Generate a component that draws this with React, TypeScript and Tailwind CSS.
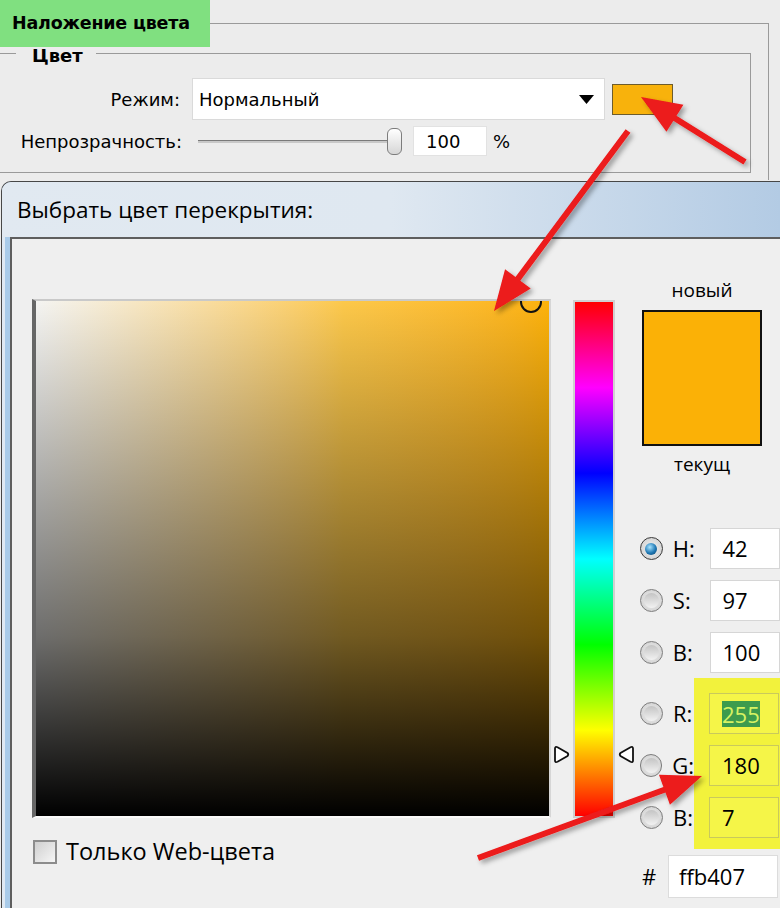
import React from "react";

const ui = "font-['DejaVu_Sans',sans-serif]";
const win = "font-['Open_Sans','Noto_Sans',sans-serif]";

type Pt = [number, number];

// polygon for a straight annotation arrow, tail -> tip
function arrowPoints(tail: Pt, tip: Pt, w = 6, hl = 40, hw = 32) {
  const dx = tip[0] - tail[0];
  const dy = tip[1] - tail[1];
  const len = Math.hypot(dx, dy);
  const ux = dx / len;
  const uy = dy / len;
  const nx = -uy;
  const ny = ux;
  const bx = tip[0] - ux * hl;
  const by = tip[1] - uy * hl;
  const pts: Pt[] = [
    [tail[0] + (nx * w) / 2, tail[1] + (ny * w) / 2],
    [bx + (nx * w) / 2, by + (ny * w) / 2],
    [bx + (nx * hw) / 2, by + (ny * hw) / 2],
    tip,
    [bx - (nx * hw) / 2, by - (ny * hw) / 2],
    [bx - (nx * w) / 2, by - (ny * w) / 2],
    [tail[0] - (nx * w) / 2, tail[1] - (ny * w) / 2],
  ];
  return pts.map((p) => p.join(",")).join(" ");
}

function Arrows() {
  const arrows: [Pt, Pt][] = [
    [[745, 162], [641, 97]],
    [[628, 131], [494, 311]],
    [[478, 858], [702, 776]],
  ];
  return (
    <svg className="absolute inset-0 pointer-events-none" width="780" height="908" viewBox="0 0 780 908">
      <defs>
        <filter id="sh" x="-20%" y="-20%" width="140%" height="140%">
          <feDropShadow dx="3" dy="3" stdDeviation="2.5" floodColor="#000" floodOpacity="0.35" />
        </filter>
      </defs>
      {arrows.map(([a, b], i) => (
        <polygon key={i} points={arrowPoints(a, b)} fill="#ec1a1a" filter="url(#sh)" />
      ))}
    </svg>
  );
}

function TopPanel() {
  return (
    <div className={`h-[180px] text-[18px] ${ui}`}>
      <fieldset className="h-[180px] mr-[11px] border-t border-r border-[#9a9a9a]">
        <legend className="p-0">
          <span className="block w-[210px] h-[47px] leading-[47px] pl-[12px] bg-[#80e080] font-bold text-[17.5px] tracking-[-0.2px]">
            Наложение цвета
          </span>
        </legend>
        <fieldset className="mr-[17px] border-t border-r border-b border-[#9a9a9a] pt-[19px] pb-[16px]">
          <legend className="ml-[16px] pl-[16px] pr-[13px] h-[12px] leading-[12px]">
            <span className="block translate-y-[3px] font-bold text-[18px]">Цвет</span>
          </legend>
          <div className="flex items-center h-[42px]">
            <div className="w-[180px] text-right">Режим:</div>
            <div className="ml-[12px] w-[413px] h-[42px] bg-white border border-[#dadada] flex items-center justify-between pl-[6px] pr-[10px]">
              <span>Нормальный</span>
              <svg width="15" height="9" viewBox="0 0 15 9">
                <polygon points="0,0 15,0 7.5,9" fill="#000" />
              </svg>
            </div>
            <div className="ml-[7px] w-[61px] h-[31px] bg-[#f8b20c] border border-[#6d5c2c]" />
          </div>
          <div className="flex items-center h-[30px] mt-[6px]">
            <div className="w-[182px] text-right">Непрозрачность:</div>
            <div className="ml-[16px] flex items-center">
              <div className="w-[192px] h-[3px] bg-[#c8c8c8] border-t border-[#7a7a7a]" />
              <div className="-ml-[3px] w-[15px] h-[27px] rounded-[6px] border border-[#7c7c7c] bg-linear-to-b from-white to-[#d6d6d6]" />
            </div>
            <div className="ml-[11px] w-[74px] h-[30px] bg-white border border-[#e2e2e2] flex items-center pl-[12px]">100</div>
            <div className="ml-[6px]">%</div>
          </div>
        </fieldset>
      </fieldset>
    </div>
  );
}

function HueArrow({ dir }: { dir: "right" | "left" }) {
  return (
    <svg width="17" height="19" viewBox="0 0 17 19" className={dir === "left" ? "-scale-x-100" : ""}>
      <path d="M2 3.5 Q2 1 4.5 2.2 L14.5 8 Q16 9.5 14.5 11 L4.5 16.8 Q2 18 2 15.5 Z" fill="#fff" stroke="#111" strokeWidth="1.8" />
    </svg>
  );
}

function Radio({ checked = false }: { checked?: boolean }) {
  return (
    <div
      className={`w-[23px] h-[23px] rounded-full border flex items-center justify-center bg-radial from-[#f4f4f4] to-[#c9c9c9] ${
        checked ? "border-[#3a3a3a]" : "border-[#7d7d7d]"
      }`}
    >
      {checked ? (
        <div className="w-[12px] h-[12px] rounded-full bg-[radial-gradient(circle_at_40%_35%,#a8e4ff,#1f78b4_55%,#0b3f66)]" />
      ) : (
        <div className="w-[15px] h-[15px] rounded-full bg-linear-to-b from-[#c4c4c4] to-[#f2f2f2]" />
      )}
    </div>
  );
}

function RightColumn() {
  const hsb = [
    { k: "H:", v: "42", checked: true },
    { k: "S:", v: "97" },
    { k: "B:", v: "100" },
  ];
  const rgb = ["R:", "G:", "B:"];
  return (
    <div className="ml-[25px] w-[140px] shrink-0 text-[22px]">
      <div className="w-[124px] text-center text-[19px] leading-[20px]">новый</div>
      <div className="ml-[2px] mt-[10px] w-[120px] h-[136px] border-2 border-[#111] bg-[#fbb106]" />
      <div className="w-[124px] mt-[8px] text-center text-[19px] leading-[20px]">текущ</div>

      <div className="mt-[54px] flex flex-col gap-[11px]">
        {hsb.map((r) => (
          <div key={r.k} className="flex items-center h-[41px]">
            <Radio checked={r.checked} />
            <div className="ml-[10px] w-[38px]">{r.k}</div>
            <div className="w-[70px] h-[41px] bg-white border border-[#d6d6d6] flex items-center pl-[11px]">{r.v}</div>
          </div>
        ))}
      </div>

      <div className="flex mt-[5px]">
        <div className="w-[54px] pt-[15px] flex flex-col gap-[11px]">
          {rgb.map((k) => (
            <div key={k} className="flex items-center h-[41px]">
              <Radio />
              <div className="ml-[10px]">{k}</div>
            </div>
          ))}
        </div>
        <div className="flex-1 bg-[#f2f23c] pl-[15px] pt-[15px] pb-[11px] flex flex-col gap-[11px]">
          <div className="w-[70px] h-[41px] bg-[#f5f548] border border-[#c9c95c] flex items-center pl-[12px]">
            <span className="bg-[#3d9b4d] text-[#d6f262] leading-[26px]">255</span>
          </div>
          <div className="w-[70px] h-[41px] bg-[#f5f548] border border-[#c9c95c] flex items-center pl-[12px]">180</div>
          <div className="w-[70px] h-[41px] bg-[#f5f548] border border-[#c9c95c] flex items-center pl-[12px]">7</div>
        </div>
      </div>

      <div className="flex items-center mt-[6px]">
        <div className="ml-[2px] w-[26px]">#</div>
        <div className="w-[110px] h-[43px] bg-white border border-[#dcdcdc] flex items-center pl-[10px]">ffb407</div>
      </div>
    </div>
  );
}

function ColorDialog() {
  return (
    <div className={`h-[728px] ml-[1px] mt-[1px] flex flex-col rounded-tl-[10px] border-t border-l border-[#474747] overflow-hidden bg-[#b9d2ea] ${win}`}>
      <div className="h-[55px] shrink-0 flex items-center pl-[15px] bg-linear-to-r from-[#e1e9f1] via-[#dfe8f1] to-[#b3cbe4] text-[22.5px]">
        Выбрать цвет перекрытия:
      </div>
      <div className="flex flex-1">
        <div className="w-[12px] border-l-[3px] border-[#dfe9f3] bg-[#a9cbe9]" />
        <div className="flex-1 flex border-t-2 border-l-2 border-[#5e5e5e] bg-[#efefef] pt-[41px] pl-[20px]">
          <div className="mt-[19px] shrink-0">
            <div className="border-l-[4px] border-l-[#666] border-t-2 border-t-[#c9c9c9] border-r-2 border-r-[#d6d6d6] border-b-2 border-b-[#fafafa]">
              <div className="relative w-[513px] h-[515px] overflow-hidden bg-linear-to-r from-[#f4f4f2] via-[#fcc84a] via-60% to-[#fdb208]">
                <div className="absolute inset-0 bg-linear-to-t from-black via-black/55 via-35% to-transparent" />
                <div className="absolute left-[484px] -top-[10px] w-[22px] h-[22px] rounded-full border-2 border-[#111]" />
              </div>
            </div>
            <div className="mt-[16px] flex items-center">
              <div className="ml-[1px] w-[24px] h-[24px] border-2 border-[#8c8c8c] bg-linear-to-br from-[#cfcfcf] to-[#f6f6f6]" />
              <div className="ml-[9px] text-[23.5px]">Только Web-цвета</div>
            </div>
          </div>
          <div className="relative ml-[22px] mt-[20px] shrink-0 h-[518px]">
            <div className="w-[42px] h-[518px] border-2 border-[#d0d0d0] bg-[linear-gradient(to_bottom,#ff0000,#ff00ff,#0000ff,#00ffff,#00ff00,#ffff00,#ff0000)]" />
            <div className="absolute -left-[20px] top-[445px]">
              <HueArrow dir="right" />
            </div>
            <div className="absolute -right-[20px] top-[445px]">
              <HueArrow dir="left" />
            </div>
          </div>
          <RightColumn />
        </div>
      </div>
    </div>
  );
}

export default function App() {
  return (
    <div className="relative w-[780px] h-[908px] overflow-hidden bg-[#ececec] text-black">
      <TopPanel />
      <ColorDialog />
      <Arrows />
    </div>
  );
}
